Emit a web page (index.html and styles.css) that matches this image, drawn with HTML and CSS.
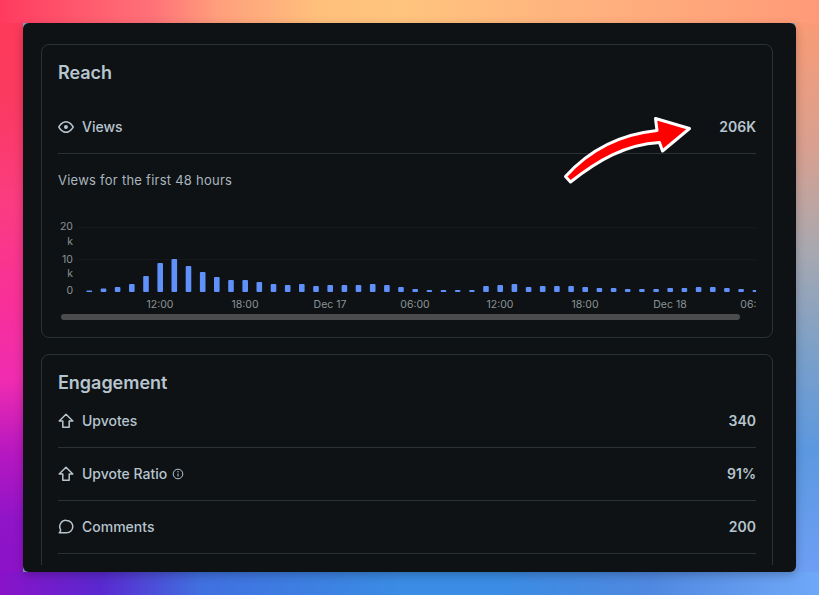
FILE: index.html
```html
<!DOCTYPE html>
<html lang="en">
<head>
<meta charset="utf-8">
<title>Post insights</title>
<link rel="stylesheet" href="styles.css">
</head>
<body>
<main class="window">
  <div class="scroller">
    <section class="card card-reach">
      <h2 class="card-title">Reach</h2>
      <div class="row">
        <div class="row-label">
          <svg class="icon" viewBox="0 0 16 16"><path class="solid" d="M8 2c1.981 0 3.671.992 4.933 2.078 1.27 1.091 2.187 2.345 2.637 3.023a1.62 1.62 0 0 1 0 1.798c-.45.678-1.367 1.932-2.637 3.023C11.67 13.008 9.981 14 8 14c-1.981 0-3.671-.992-4.933-2.078C1.797 10.83.88 9.576.43 8.898a1.62 1.62 0 0 1 0-1.798c.45-.677 1.367-1.931 2.637-3.022C4.33 2.992 6.019 2 8 2ZM1.679 7.932a.12.12 0 0 0 0 .136c.411.622 1.241 1.75 2.366 2.717C5.176 11.758 6.527 12.5 8 12.5c1.473 0 2.825-.742 3.955-1.715 1.124-.967 1.954-2.096 2.366-2.717a.12.12 0 0 0 0-.136c-.412-.621-1.242-1.75-2.366-2.717C10.824 4.242 9.473 3.5 8 3.5c-1.473 0-2.825.742-3.955 1.715-1.124.967-1.954 2.096-2.366 2.717ZM8 10a2 2 0 1 1-.001-3.999A2 2 0 0 1 8 10Z"/></svg>
          <span>Views</span>
        </div>
        <span class="row-value">206K</span>
      </div>
      <p class="chart-caption">Views for the first 48 hours</p>
      <div class="chart-wrap">
        <svg class="chart" width="698" height="90" viewBox="58 220 698 90">
          <g class="grid">
            <rect x="78" y="226" width="678" height="1"/>
            <rect x="78" y="258" width="678" height="1"/>
          </g>
          <g class="y-labels">
            <text x="73" y="228.500">20</text>
            <text x="73" y="243.500">k</text>
            <text x="73" y="261.500">10</text>
            <text x="73" y="275.500">k</text>
            <text x="73" y="292.500">0</text>
          </g>
          <g class="bars">
            <rect x="86.5" y="289.5" width="5.6" height="1.5" rx="0.5"/>
            <rect x="100.7" y="287.5" width="5.6" height="3.5" rx="1"/>
            <rect x="114.8" y="286" width="5.6" height="5" rx="1"/>
            <rect x="129" y="283" width="5.6" height="8" rx="1"/>
            <rect x="143.2" y="275" width="5.6" height="16" rx="1"/>
            <rect x="157.4" y="262" width="5.6" height="29" rx="1"/>
            <rect x="171.5" y="258" width="5.6" height="33" rx="1"/>
            <rect x="185.7" y="265" width="5.6" height="26" rx="1"/>
            <rect x="199.9" y="271" width="5.6" height="20" rx="1"/>
            <rect x="214" y="276" width="5.6" height="15" rx="1"/>
            <rect x="228.2" y="279" width="5.6" height="12" rx="1"/>
            <rect x="242.4" y="279" width="5.6" height="12" rx="1"/>
            <rect x="256.5" y="281" width="5.6" height="10" rx="1"/>
            <rect x="270.7" y="283" width="5.6" height="8" rx="1"/>
            <rect x="284.9" y="284" width="5.6" height="7" rx="1"/>
            <rect x="299" y="283" width="5.6" height="8" rx="1"/>
            <rect x="313.2" y="285" width="5.6" height="6" rx="1"/>
            <rect x="327.4" y="284" width="5.6" height="7" rx="1"/>
            <rect x="341.6" y="284" width="5.6" height="7" rx="1"/>
            <rect x="355.7" y="284" width="5.6" height="7" rx="1"/>
            <rect x="369.9" y="283" width="5.6" height="8" rx="1"/>
            <rect x="384.1" y="284" width="5.6" height="7" rx="1"/>
            <rect x="398.2" y="286" width="5.6" height="5" rx="1"/>
            <rect x="412.4" y="288" width="5.6" height="3" rx="1"/>
            <rect x="426.6" y="289" width="5.6" height="2" rx="1"/>
            <rect x="440.7" y="289" width="5.6" height="2" rx="1"/>
            <rect x="454.9" y="289" width="5.6" height="2" rx="1"/>
            <rect x="469.1" y="289" width="5.6" height="2" rx="1"/>
            <rect x="483.2" y="285" width="5.6" height="6" rx="1"/>
            <rect x="497.4" y="284" width="5.6" height="7" rx="1"/>
            <rect x="511.6" y="283" width="5.6" height="8" rx="1"/>
            <rect x="525.8" y="286" width="5.6" height="5" rx="1"/>
            <rect x="539.9" y="285" width="5.6" height="6" rx="1"/>
            <rect x="554.1" y="285" width="5.6" height="6" rx="1"/>
            <rect x="568.3" y="285" width="5.6" height="6" rx="1"/>
            <rect x="582.4" y="286" width="5.6" height="5" rx="1"/>
            <rect x="596.6" y="287" width="5.6" height="4" rx="1"/>
            <rect x="610.8" y="287" width="5.6" height="4" rx="1"/>
            <rect x="624.9" y="288" width="5.6" height="3" rx="1"/>
            <rect x="639.1" y="288" width="5.6" height="3" rx="1"/>
            <rect x="653.3" y="288" width="5.6" height="3" rx="1"/>
            <rect x="667.4" y="287" width="5.6" height="4" rx="1"/>
            <rect x="681.6" y="287" width="5.6" height="4" rx="1"/>
            <rect x="695.8" y="286" width="5.6" height="5" rx="1"/>
            <rect x="710" y="286" width="5.6" height="5" rx="1"/>
            <rect x="724.1" y="287" width="5.6" height="4" rx="1"/>
            <rect x="738.3" y="288" width="5.6" height="3" rx="1"/>
            <rect x="752.5" y="289" width="5.6" height="2" rx="1"/>
          </g>
          <g class="x-labels">
            <text x="160" y="306.500">12:00</text>
            <text x="245" y="306.500">18:00</text>
            <text x="330" y="306.500">Dec 17</text>
            <text x="415" y="306.500">06:00</text>
            <text x="500" y="306.500">12:00</text>
            <text x="585" y="306.500">18:00</text>
            <text x="670" y="306.500">Dec 18</text>
            <text x="755" y="306.500">06:00</text>
          </g>
        </svg>
        <div class="scrollbar"></div>
      </div>
    </section>

    <section class="card card-engagement">
      <h2 class="card-title">Engagement</h2>
      <div class="rows">
        <div class="row">
          <div class="row-label">
            <svg class="icon" viewBox="0 0 16 16"><path class="line" d="M8 1.200 14.800 8H11.200v6.300H4.800V8H1.200Z"/></svg>
            <span>Upvotes</span>
          </div>
          <span class="row-value">340</span>
        </div>
        <div class="row">
          <div class="row-label">
            <svg class="icon" viewBox="0 0 16 16"><path class="line" d="M8 1.200 14.800 8H11.200v6.300H4.800V8H1.200Z"/></svg>
            <span>Upvote Ratio</span>
            <svg class="icon-info" viewBox="0 0 12 12"><circle class="thin" cx="6" cy="6" r="4.800"/><path class="thin" d="M6 5.500v3"/><circle class="dot" cx="6" cy="3.700" r=".7"/></svg>
          </div>
          <span class="row-value">91%</span>
        </div>
        <div class="row">
          <div class="row-label">
            <svg class="icon" viewBox="0 0 16 16"><path class="line" d="M8.600 1.400a6.200 6.200 0 1 1 0 12.400H1.200c1.200-.8 1.600-2 1.300-3.300A6.200 6.200 0 0 1 8.600 1.400Z"/></svg>
            <span>Comments</span>
          </div>
          <span class="row-value">200</span>
        </div>
      </div>
    </section>
  </div>
  <svg class="callout" width="136" height="74" viewBox="562 112 136 74">
    <path class="callout-arrow" d="M565.500 176.500C588 151.500 618 134.500 657 130.500L655.500 118.500 689.500 128.500 662.500 151 659.500 142.500C625 144.500 598 160.500 570.500 182Z"/>
  </svg>
</main>
</body>
</html>
```

FILE: styles.css
```css
* { box-sizing: border-box; }

html, body { height: 100%; }

body {
  margin: 0;
  padding: 23px;
  overflow: hidden;
  font-family: Inter, "Liberation Sans", sans-serif;
  color: #b7c5cf;
  background-color: #7ca0c8;
  background-repeat: no-repeat;
  background-size: 100% 23px, 100% 23px, 23px 100%, 24px 100%;
  background-position: 0 0, 0 100%, 0 0, 100% 0;
  background-image:
    linear-gradient(90deg, #ff3a60 0, #ff6070 100px, #ff7078 150px, #ffa07c 220px, #ffc07c 320px, #ffc47e 400px, #ffb07e 600px, #ff9a78 100%),
    linear-gradient(90deg, #8a12c8 0, #5a28d0 100px, #4070e0 200px, #3a8ce4 400px, #3a8ce4 500px, #4f88e0 650px, #70a8f8 100%),
    linear-gradient(180deg, #ff3a58 0, #fa3a60 100px, #fb3c80 200px, #f83098 300px, #f02cb0 380px, #b818c0 450px, #9014c8 520px, #8a12c8 100%),
    linear-gradient(180deg, #ff9a70 0, #d8a090 150px, #a8a8b0 250px, #7ca0c8 350px, #5c98e0 450px, #70a0f8 100%);
}

.window {
  position: relative;
  height: 549px;
  padding: 21px 23px 7px 18px;
  background: #0e1214;
  border-radius: 6px;
  box-shadow: 0 3px 10px rgba(0, 0, 0, .25);
}

.scroller {
  height: 100%;
  overflow: hidden;
  display: flex;
  flex-direction: column;
  gap: 16px;
}

.card {
  flex: none;
  padding: 17px 16px 0;
  border: 1px solid #2b3236;
  border-radius: 8px;
}

.card-reach { height: 294px; }

.card-engagement { height: 400px; }

.card-title {
  margin: 0;
  font-size: 18px;
  line-height: 22px;
  font-weight: 600;
  letter-spacing: -.03px;
  color: #b7c5cf;
}

.card-reach .card-title { margin-bottom: 17px; }

.card-engagement .card-title { margin-bottom: 1px; }

.row {
  display: flex;
  align-items: center;
  justify-content: space-between;
  height: 53px;
  padding-bottom: 2px;
  border-bottom: 1px solid #2b3236;
  font-size: 14px;
  font-weight: 500;
}

.row-label {
  display: flex;
  align-items: center;
  gap: 8px;
}

.row-value { font-weight: 600; }

.icon {
  flex: none;
  width: 16px;
  height: 16px;
  margin-bottom: -2px;
}

.icon-info {
  flex: none;
  width: 12px;
  height: 12px;
  margin-left: -3px;
  margin-bottom: -2px;
}

.solid, .dot { fill: #b7c5cf; }

.line {
  fill: none;
  stroke: #b7c5cf;
  stroke-width: 1.500;
  stroke-linejoin: round;
}

.thin {
  fill: none;
  stroke: #b7c5cf;
  stroke-width: 1;
}

.chart-caption {
  margin: 17px 0 0;
  font-size: 13px;
  line-height: 18px;
  letter-spacing: .25px;
  color: #a9b6bf;
}

.chart-wrap {
  position: relative;
  margin-top: 32px;
}

.chart { display: block; }

.grid rect { fill: #15191b; }

.bars rect { fill: #6090fa; }

.y-labels text {
  font-size: 10.500px;
  fill: #8b9297;
  text-anchor: end;
}

.x-labels text {
  font-size: 10.500px;
  fill: #8b9297;
  text-anchor: middle;
}

.scrollbar {
  width: 679px;
  height: 6px;
  margin: 3px 0 0 3px;
  border-radius: 3px;
  background: #4b4c4e;
}

.callout {
  position: absolute;
  left: 539px;
  top: 89px;
}

.callout-arrow {
  fill: #fe0000;
  stroke: #fff;
  stroke-width: 3;
  stroke-linejoin: round;
}
```
